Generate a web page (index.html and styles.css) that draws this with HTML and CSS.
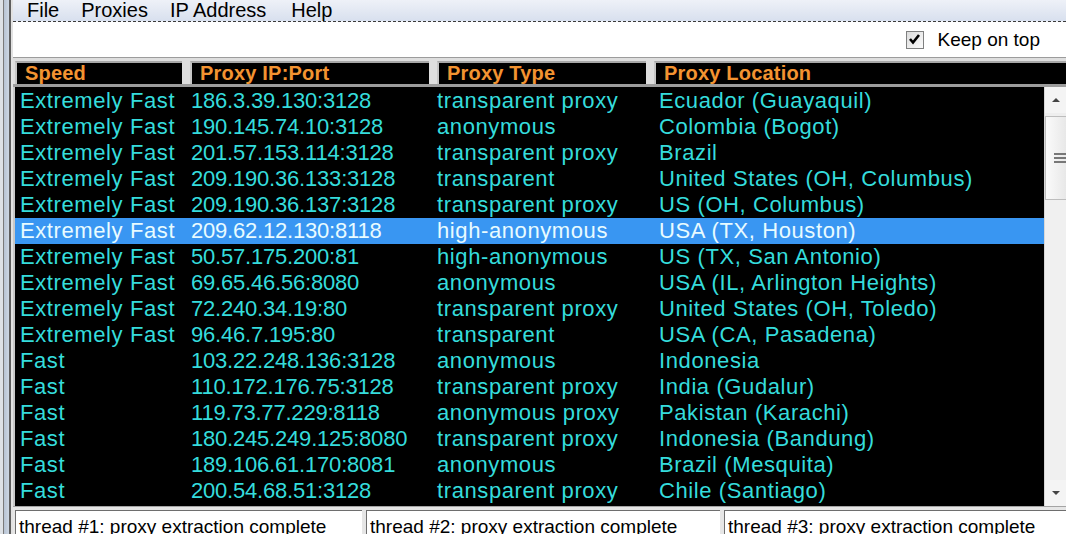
FILE: index.html
```html
<!DOCTYPE html>
<html lang="en">
<head>
    <meta charset="UTF-8">
    <meta name="viewport" content="width=device-width, initial-scale=1.0">
    <title>Proxy Finder</title>
    <link rel="stylesheet" href="styles.css">
</head>
<body>
    <div class="window">
        <div class="frame"></div>
        <div class="main">
            <div class="menubar">
                <span>File</span>
                <span>Proxies</span>
                <span>IP Address</span>
                <span class="help">Help</span>
            </div>

            <div class="toolbar">
                <span class="checkbox">
                    <svg width="17" height="17" viewBox="0 0 17 17">
                        <path d="M4 8 L7 11.5 L13 4" fill="none" stroke="#000" stroke-width="2.6"/>
                    </svg>
                </span>
                <span>Keep on top</span>
            </div>

            <div class="header">
                <div class="hcell c1">Speed</div>
                <div class="hcell c2">Proxy IP:Port</div>
                <div class="hcell c3">Proxy Type</div>
                <div class="hcell c4">Proxy Location</div>
            </div>

            <div class="listbody">
                <div class="rows">
                    <div class="row"><span>Extremely Fast</span><span>186.3.39.130:3128</span><span>transparent proxy</span><span>Ecuador (Guayaquil)</span></div>
                    <div class="row"><span>Extremely Fast</span><span>190.145.74.10:3128</span><span>anonymous</span><span>Colombia (Bogot)</span></div>
                    <div class="row"><span>Extremely Fast</span><span>201.57.153.114:3128</span><span>transparent proxy</span><span>Brazil</span></div>
                    <div class="row"><span>Extremely Fast</span><span>209.190.36.133:3128</span><span>transparent</span><span>United States (OH, Columbus)</span></div>
                    <div class="row"><span>Extremely Fast</span><span>209.190.36.137:3128</span><span>transparent proxy</span><span>US (OH, Columbus)</span></div>
                    <div class="row selected"><span>Extremely Fast</span><span>209.62.12.130:8118</span><span>high-anonymous</span><span>USA (TX, Houston)</span></div>
                    <div class="row"><span>Extremely Fast</span><span>50.57.175.200:81</span><span>high-anonymous</span><span>US (TX, San Antonio)</span></div>
                    <div class="row"><span>Extremely Fast</span><span>69.65.46.56:8080</span><span>anonymous</span><span>USA (IL, Arlington Heights)</span></div>
                    <div class="row"><span>Extremely Fast</span><span>72.240.34.19:80</span><span>transparent proxy</span><span>United States (OH, Toledo)</span></div>
                    <div class="row"><span>Extremely Fast</span><span>96.46.7.195:80</span><span>transparent</span><span>USA (CA, Pasadena)</span></div>
                    <div class="row"><span>Fast</span><span>103.22.248.136:3128</span><span>anonymous</span><span>Indonesia</span></div>
                    <div class="row"><span>Fast</span><span>110.172.176.75:3128</span><span>transparent proxy</span><span>India (Gudalur)</span></div>
                    <div class="row"><span>Fast</span><span>119.73.77.229:8118</span><span>anonymous proxy</span><span>Pakistan (Karachi)</span></div>
                    <div class="row"><span>Fast</span><span>180.245.249.125:8080</span><span>transparent proxy</span><span>Indonesia (Bandung)</span></div>
                    <div class="row"><span>Fast</span><span>189.106.61.170:8081</span><span>anonymous</span><span>Brazil (Mesquita)</span></div>
                    <div class="row"><span>Fast</span><span>200.54.68.51:3128</span><span>transparent proxy</span><span>Chile (Santiago)</span></div>
                </div>
                <div class="scrollbar">
                    <div class="sb-btn"><span class="arrow-up"></span></div>
                    <div class="sb-thumb">
                        <span class="grip"></span>
                        <span class="grip"></span>
                        <span class="grip"></span>
                    </div>
                    <div class="sb-track"></div>
                    <div class="sb-btn"><span class="arrow-down"></span></div>
                </div>
            </div>

            <div class="status">
                <div class="panel p1">thread #1: proxy extraction complete</div>
                <div class="panel p2">thread #2: proxy extraction complete</div>
                <div class="panel p3">thread #3: proxy extraction complete</div>
            </div>
        </div>
    </div>
</body>
</html>
```

FILE: styles.css
```css
html, body {
    margin: 0;
    height: 534px;
    overflow: hidden;
}
body {
    font-family: "Liberation Sans", Arial, sans-serif;
    background: #fff;
    color: #000;
}
.window {
    display: flex;
    height: 534px;
}
.frame {
    width: 13px;
    flex: none;
    background: linear-gradient(to right,
        #dde1e6 0, #dde1e6 3px,
        #7a7a7a 3px, #7a7a7a 4px,
        #b7c3d3 4px, #cdd7e4 9px,
        #5e5e5e 9px, #5e5e5e 11px,
        #e2e2e2 11px);
}
.main {
    flex: 1;
    min-width: 0;
    display: flex;
    flex-direction: column;
}
.main > div {
    flex-shrink: 0;
}
.menubar {
    height: 21px;
    display: flex;
    gap: 22px;
    padding-left: 14px;
    font-size: 20px;
    line-height: 20px;
    background: linear-gradient(#eef1f8, #d8e0ee);
    border-bottom: 1px dashed #3a3a3a;
}
.menubar .help {
    margin-left: 3px;
}
.toolbar {
    height: 35px;
    display: flex;
    justify-content: flex-end;
    align-items: center;
    gap: 14px;
    padding-right: 26px;
    font-size: 19px;
    border-bottom: 1px solid #9c9c9c;
}
.checkbox {
    width: 16px;
    height: 16px;
    border: 1px solid #7f8080;
    background: linear-gradient(135deg, #dcdcdc, #fbfbfb);
    display: flex;
}
.checkbox svg {
    margin: -0.5px;
}
.header {
    height: 29px;
    box-sizing: border-box;
    display: flex;
    padding: 3px 0 0 2px;
    background: #dedede;
    border-bottom: 3px solid #9c9c9c;
}
.hcell {
    background: #000;
    border-top: 2px solid #a8a8a8;
    border-left: 2px solid #c6c6c6;
    margin-right: 8px;
    padding-left: 8px;
    color: #f39331;
    font-weight: bold;
    font-size: 20px;
    line-height: 21px;
    letter-spacing: 0.2px;
    white-space: nowrap;
}
.c1 { width: 157px; }
.c2 { width: 229px; }
.c3 { width: 199px; }
.c4 { flex: 1; margin-right: 0; }
.listbody {
    height: 419px;
    display: flex;
}
.rows {
    flex: 1;
    background: #000;
    border-left: 2px solid #c8c8c8;
    padding-top: 1px;
}
.row {
    display: grid;
    grid-template-columns: 171px 246px 222px 1fr;
    padding-left: 5px;
    height: 26px;
    line-height: 26px;
    font-size: 22px;
    letter-spacing: 0.6px;
    color: #35dcdc;
    white-space: nowrap;
}
.row span:nth-child(2) {
    letter-spacing: -0.2px;
}
.row.selected {
    background: #3996f2;
    color: #e8fbff;
}
.scrollbar {
    width: 21px;
    flex: none;
    display: flex;
    flex-direction: column;
    background: #eeeeee;
    border-left: 1px solid #d8d8d8;
}
.sb-btn {
    height: 26px;
    display: flex;
    align-items: center;
    justify-content: center;
    background: #f4f4f4;
}
.arrow-up, .arrow-down {
    width: 0;
    height: 0;
    border-left: 4px solid transparent;
    border-right: 4px solid transparent;
}
.arrow-up {
    border-bottom: 4px solid #444;
}
.arrow-down {
    border-top: 4px solid #444;
}
.sb-thumb {
    height: 82px;
    margin-top: 3px;
    border: 1px solid #bdbdbd;
    border-right: none;
    background: linear-gradient(to right, #fafafa, #e8e8e8);
    display: flex;
    flex-direction: column;
    justify-content: center;
    align-items: flex-end;
    gap: 2px;
}
.grip {
    width: 12px;
    height: 2px;
    background: #777;
}
.sb-track {
    flex: 1;
    background: #f0f0f0;
}
.main > .status {
    flex: 1 1 auto;
    min-height: 0;
    overflow: hidden;
    display: flex;
    gap: 4px;
    padding: 3px 0 0 2px;
    background: #e6e6e6;
    border-top: 1px solid #a4a4a4;
}
.panel {
    background: #fff;
    border-top: 1px solid #6e6e6e;
    border-left: 1px solid #6e6e6e;
    padding: 4px 0 0 3px;
    font-size: 19px;
    line-height: 24px;
    white-space: nowrap;
    overflow: hidden;
}
.p1 { width: 343px; }
.p2 { width: 350px; }
.p3 { flex: 1; }
```
